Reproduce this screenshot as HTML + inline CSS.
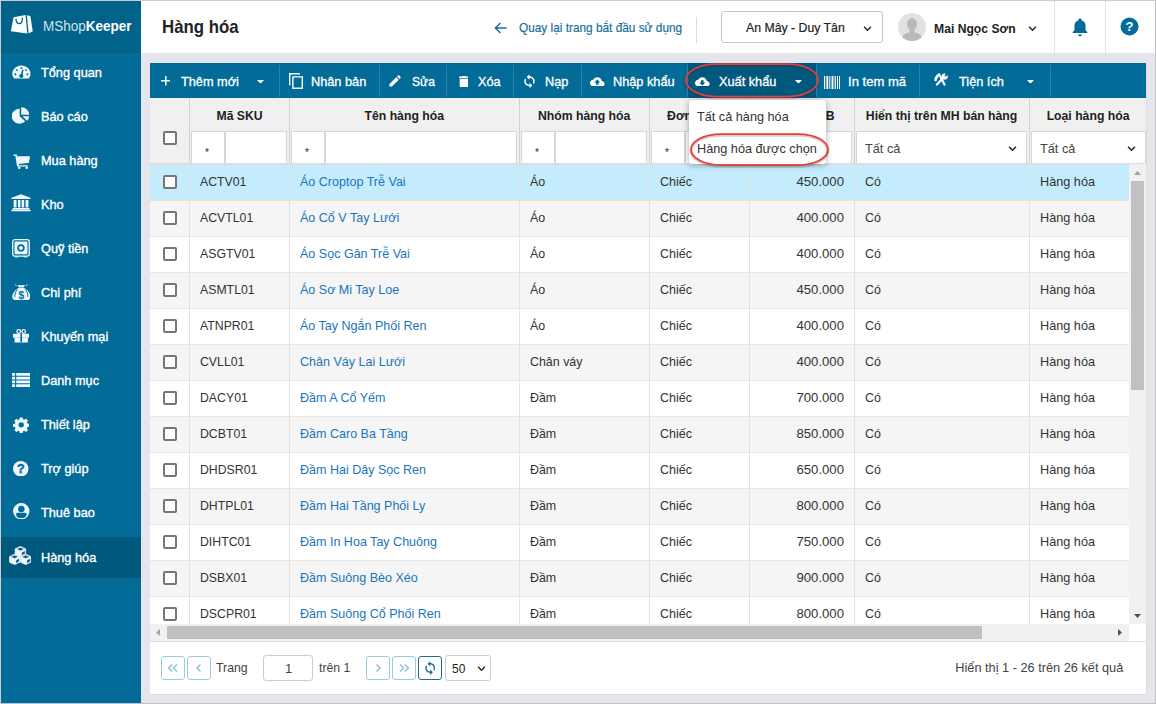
<!DOCTYPE html>
<html lang="vi">
<head>
<meta charset="utf-8">
<title>Hàng hóa - MShopKeeper</title>
<style>
*{box-sizing:border-box;margin:0;padding:0}
html,body{width:1156px;height:704px;overflow:hidden}
body{position:relative;background:#e5e6eb;font-family:"Liberation Sans",sans-serif;font-size:13px;color:#333}
.t{display:inline-block;transform:scaleX(0.91);white-space:nowrap}
#frame{position:absolute;left:0;top:0;width:1156px;height:704px;border:1px solid #bfbfbf;border-left-color:#d3ccc6;border-top-color:#d3ccc6;z-index:50;pointer-events:none}
#side{position:absolute;left:1px;top:1px;width:140px;height:702px;background:#026b97}
#logo{position:absolute;left:0;top:0;width:140px;height:52px;background:#01628a}
#logo .txt{position:absolute;left:42px;top:17px;font-size:14px;color:#fff;white-space:nowrap}
.mi{position:absolute;left:0;width:140px;height:44px;color:#fff;font-size:13px}
.mi .t{position:absolute;left:40px;top:13px;-webkit-text-stroke:0.35px #fff;transform:scaleX(.98)}
.mi svg{position:absolute}
.mi.act{background:#01587d}
#top{position:absolute;left:141px;top:1px;width:1014px;height:52px;background:#fff}
#title{position:absolute;left:21px;top:15px;font-size:19px;font-weight:bold;color:#222}
#back{position:absolute;left:378px;top:19px;font-size:13px;color:#1a6f9a;-webkit-text-stroke:0.2px #1a6f9a}
#sel{position:absolute;left:580px;top:10px;width:162px;height:32px;border:1px solid #c6c6c6;border-radius:3px;background:#fff}
#sel .t{position:absolute;left:24px;top:8px;transform:scaleX(.945);font-size:13px;color:#222;-webkit-text-stroke:0.2px #222}
#user{position:absolute;left:793px;top:20px;font-size:13px;font-weight:bold;color:#222}
.vline{position:absolute;top:0;width:1px;height:52px;background:#e2e2e2}
#panel{position:absolute;left:150px;top:63px;width:996px;height:631px;background:#fff;box-shadow:1px 1px 0 #dcdcdf}
#tb{position:absolute;left:0;top:0;width:996px;height:35px;background:#026b97;color:#fff;font-size:13px}
#tb .t{position:absolute;top:11px;-webkit-text-stroke:0.3px #fff;transform:scaleX(.98)}
#tb svg{position:absolute}
.sep{position:absolute;top:2px;width:1px;height:32px;background:#2a83ab}
#gh{position:absolute;left:0;top:35px;width:996px;height:66px;background:#f0f0f0;border-bottom:1px solid #ddd}
.hc{position:absolute;top:0;height:66px;border-left:1px solid #d2d2d2}
.hc .h{position:absolute;left:0;right:0;top:10px;text-align:center;font-weight:bold;font-size:13px;color:#222;white-space:nowrap}
.fo{position:absolute;top:33px;height:32px;width:34px;background:#fff;border:1px solid #d6d6d6;border-bottom:none}
.fo i{position:absolute;left:13px;top:15.500px;font-style:normal;font-size:10px;line-height:10px;color:#315}
.fi{position:absolute;top:33px;height:32px;background:#fff;border:1px solid #d6d6d6;border-bottom:none}
.fi .t{position:absolute;left:8px;top:9px;font-size:13px;color:#444;transform:scaleX(.978)}
#gb{position:absolute;left:0;top:101px;width:979px;height:460px;overflow:hidden;background:#fff}
.row{position:absolute;left:0;width:979px;height:36px;background:#fff;border-top:1px solid #e6e6e6}
.row.alt{background:#f5f5f5}
.row.sel{background:#c4ecfd;border-top:1px solid #ddd}
.row.r1{border-top:1px solid #f1e3b9}
.c{position:absolute;top:-1px;height:36px;border-left:1px solid #e2e2e2;font-size:13px;color:#333}
.c .t{position:absolute;top:10px}
.c.lnk{color:#1b75bb}
.cb{position:absolute;left:13px;top:11px;width:14px;height:14px;border:2px solid #757575;border-radius:2px;background:#fff}
#vs{position:absolute;left:979px;top:101px;width:17px;height:460px;background:#f1f1f1}
#hs{position:absolute;left:0;top:561px;width:979px;height:17px;background:#f1f1f1}
#ft{position:absolute;left:0;top:578px;width:996px;height:53px;background:#fff;border-top:1px solid #ddd}
.pb{position:absolute;top:14px;width:24px;height:24px;border:1px solid #9ccbe0;border-radius:3px;background:#fff}
.pb svg{position:absolute;left:0;top:0}
#ft .t{position:absolute;top:18px;font-size:13px;color:#444;transform:scaleX(.945)}
#menu{position:absolute;left:539px;top:37px;width:137px;height:64px;background:#fff;border-radius:3px;box-shadow:0 1px 6px rgba(0,0,0,.35);z-index:10}
#menu .t{position:absolute;left:8px;font-size:13px;color:#333;transform:scaleX(.976)}
.ring{position:absolute;border:1.800px solid #e2403f;box-shadow:0 1px 3px rgba(90,0,0,.4);z-index:20}
</style>
</head>
<body>
<div id="side">
<div id="logo"><svg style="position:absolute;left:9px;top:13px" width="24" height="21" viewBox="0 0 24 21"><path fill="#fff" d="M3.600 3.200L15.600 1.100 17.200 19.600 0.800 17.200z"/><path fill="#f4fafc" d="M16.900 1.200l3.500 0.900 2.400 15.200-4.200 2.300z"/><path fill="none" stroke="#01628a" stroke-width="1.300" d="M5.800 4.600c0.400 3.600 1.900 5.200 3.800 5 1.900-0.200 2.900-2.300 2.800-5.800"/></svg><div class="txt"><span class="t " style="transform-origin:0 50%;transform:scaleX(.964)"><span style="opacity:.82">MShop</span><b>Keeper</b></span></div></div>
<div class="mi" style="top:51px;height:44px"><svg style="left:11.0px;top:12.5px" width="18.8" height="14.5" preserveAspectRatio="none" viewBox="0 0 20 17"><path fill="#eef8fd" d="M10 0.5C4.5 0.5 0.3 4.8 0.3 10.2c0 1.9 0.5 3.6 1.4 5.1 0.2 0.4 0.6 0.6 1 0.6h14.6c0.4 0 0.8-0.2 1-0.6 0.9-1.5 1.4-3.2 1.4-5.1C19.7 4.8 15.5 0.5 10 0.5z"/><g fill="#026b97"><circle cx="3.6" cy="10.8" r="1.1"/><circle cx="5.2" cy="6" r="1.1"/><circle cx="10" cy="3.6" r="1.1"/><circle cx="14.8" cy="6" r="1.1"/><circle cx="16.4" cy="10.8" r="1.1"/><path d="M10.9 5.2l-1.5 5.6a2.1 2.1 0 1 0 1.9 0.5l1-5.7z"/></g></svg><span class="t " style="transform-origin:0 50%;">Tổng quan</span></div>
<div class="mi" style="top:95px;height:44px"><svg style="left:11.0px;top:11.0px" width="18.0" height="17.0" preserveAspectRatio="none" viewBox="0 0 20 20"><path fill="#eef8fd" d="M8.5 2.2v8.6l6.1 6.1A8.7 8.7 0 1 1 8.5 2.2z"/><path fill="#eef8fd" d="M10.3 0.3a8.8 8.8 0 0 1 8.8 8.8h-8.8z"/><path fill="#eef8fd" d="M11.6 10.9h7.5a8.7 8.7 0 0 1-2.3 5.3z"/></svg><span class="t " style="transform-origin:0 50%;">Báo cáo</span></div>
<div class="mi" style="top:139px;height:44px"><svg style="left:11.6px;top:13.5px" width="17.4" height="15.3" preserveAspectRatio="none" viewBox="0 0 20 18"><path fill="#eef8fd" d="M0.4 0.6h3.3c0.4 0 0.7 0.3 0.8 0.7l0.3 1.4h14c0.5 0 0.9 0.5 0.8 1l-1.4 6.2c-0.1 0.4-0.4 0.6-0.8 0.7L6.5 11.800l0.3 1.400h10.100v1.600H5.400c-0.400 0-0.700-0.300-0.800-0.700L2.700 2.200H0.400z"/><circle fill="#eef8fd" cx="7.2" cy="16.200" r="1.500"/><circle fill="#eef8fd" cx="15.800" cy="16.200" r="1.500"/></svg><span class="t " style="transform-origin:0 50%;">Mua hàng</span></div>
<div class="mi" style="top:183px;height:44px"><svg style="left:9.7px;top:10.4px" width="20.0" height="17.4" preserveAspectRatio="none" viewBox="0 0 21 20"><path fill="#eef8fd" d="M10.5 0.2l10 4v1.600H0.500V4.200z"/><path fill="#eef8fd" d="M2.800 7h3v8.500h-3zM7.300 7h2.600v8.500H7.300zM11.200 7h2.600v8.500h-2.600zM15.300 7h3v8.500h-3z"/><path fill="#eef8fd" d="M1.600 16.200h17.800v1.500H1.600zM0.500 18.200h20v1.600H0.500z"/></svg><span class="t " style="transform-origin:0 50%;">Kho</span></div>
<div class="mi" style="top:227px;height:44px"><svg style="left:10.8px;top:11.0px" width="18" height="18.800" preserveAspectRatio="none" viewBox="0 0 18 18.800"><rect fill="none" stroke="#eef8fd" stroke-width="1.300" x="0.700" y="0.700" width="16.600" height="16.400" rx="2.200"/><rect fill="#eef8fd" x="2.500" y="2.500" width="13" height="12.800" rx="1"/><circle fill="#026b97" cx="9" cy="8.900" r="3.700"/><circle fill="#eef8fd" cx="9" cy="8.900" r="2"/><rect fill="#eef8fd" x="3" y="17.400" width="3.200" height="1"/><rect fill="#eef8fd" x="11.800" y="17.400" width="3.200" height="1"/></svg><span class="t " style="transform-origin:0 50%;">Quỹ tiền</span></div>
<div class="mi" style="top:271px;height:44px"><svg style="left:10.5px;top:11.7px" width="18.7" height="16.6" preserveAspectRatio="none" viewBox="0 0 19 17"><path fill="#eef8fd" d="M5.800 1.400c1.200-0.900 2.400-0.200 3.700-0.200s2.500-0.700 3.700 0.200l-1.300 2.300H7.100z"/><path fill="none" stroke="#eef8fd" stroke-width="0.900" d="M3.200 0.600l1.600 1.200M15.800 0.600l-1.600 1.200"/><path fill="#eef8fd" d="M6.700 4.200h5.600c3.600 1.900 6.400 5.500 6.400 8.900 0 2.400-1.700 3.700-3.900 3.700H4.200c-2.200 0-3.900-1.300-3.900-3.700 0-3.400 2.800-7 6.400-8.900z"/><path fill="none" stroke="#026b97" stroke-width="1" d="M5.600 5.600C3.700 7.600 2.700 10.300 2.900 13.200M13.400 5.600c1.900 2 2.900 4.700 2.700 7.600"/><text x="9.500" y="15" font-family="Liberation Sans,sans-serif" font-size="10.500" font-weight="bold" text-anchor="middle" fill="#026b97">$</text></svg><span class="t " style="transform-origin:0 50%;">Chi phí</span></div>
<div class="mi" style="top:315px;height:44px"><svg style="left:12.0px;top:13.0px" width="16.400" height="13.600" preserveAspectRatio="none" viewBox="0 0 16.400 13.600"><circle fill="none" stroke="#eef8fd" stroke-width="1.250" cx="5.700" cy="2.500" r="1.800"/><circle fill="none" stroke="#eef8fd" stroke-width="1.250" cx="10.700" cy="2.500" r="1.800"/><rect fill="#eef8fd" x="0" y="4.800" width="16.400" height="3.800"/><rect fill="#eef8fd" x="1.500" y="8.500" width="13.400" height="5"/><rect fill="#026b97" x="7.400" y="4.800" width="1.600" height="8.200"/></svg><span class="t " style="transform-origin:0 50%;">Khuyến mại</span></div>
<div class="mi" style="top:359px;height:44px"><svg style="left:10.8px;top:13.1px" width="18.600" height="14" preserveAspectRatio="none" viewBox="0.500 0.500 19 15.300"><path fill="#eef8fd" d="M0.500 0.500h3.200v3h-3.200zM4.800 0.500h14.700v3H4.800zM0.500 4.600h3.200v3h-3.200zM4.800 4.600h14.700v3H4.800zM0.500 8.700h3.200v3h-3.200zM4.800 8.700h14.700v3H4.800zM0.500 12.800h3.200v3h-3.200zM4.800 12.800h14.700v3H4.800z"/></svg><span class="t " style="transform-origin:0 50%;">Danh mục</span></div>
<div class="mi" style="top:403px;height:44px"><svg style="left:12.0px;top:13.0px" width="16.400" height="15.700" preserveAspectRatio="none" viewBox="0.300 0.300 19.400 19.400"><path fill="#eef8fd" fill-rule="evenodd" d="M8.300 0.800h3.400l0.500 2.400 1.500 0.600 2-1.300 2.400 2.400-1.300 2 0.600 1.500 2.400 0.500v3.400l-2.400 0.500-0.600 1.500 1.300 2-2.400 2.400-2-1.300-1.500 0.600-0.500 2.400H8.300l-0.500-2.400-1.500-0.600-2 1.300-2.400-2.400 1.300-2-0.600-1.500-2.400-0.500V9l2.400-0.500 0.600-1.500-1.300-2 2.400-2.400 2 1.300 1.500-0.600zM10 6.800a3.200 3.200 0 1 0 0 6.400 3.200 3.200 0 0 0 0-6.400z"/></svg><span class="t " style="transform-origin:0 50%;">Thiết lập</span></div>
<div class="mi" style="top:447px;height:44px"><svg style="left:12.4px;top:12.6px" width="15.500" height="15.500" viewBox="0 0 18 18"><circle fill="#eef8fd" cx="9" cy="9" r="9"/><text x="9" y="14.200" font-family="Liberation Sans,sans-serif" font-size="14.500" font-weight="bold" text-anchor="middle" fill="#026b97" stroke="#026b97" stroke-width="0.500">?</text></svg><span class="t " style="transform-origin:0 50%;">Trợ giúp</span></div>
<div class="mi" style="top:491px;height:44px"><svg style="left:12.0px;top:10.8px" width="16.500" height="16.400" viewBox="0 0 16.500 16.400"><circle fill="#eef8fd" cx="8.250" cy="8.200" r="8.200"/><circle fill="#026b97" cx="8.300" cy="6.100" r="3.250"/><path fill="#026b97" d="M3.100 11.200Q3.100 9.800 4.700 9.800H11.900Q13.500 9.800 13.500 11.200Q13.300 15.100 8.300 15.100Q3.300 15.100 3.100 11.200z"/></svg><span class="t " style="transform-origin:0 50%;">Thuê bao</span></div>
<div class="mi act" style="top:536px;height:41px"><svg style="left:8.0px;top:9.0px" width="22.300" height="19" viewBox="0 0 22.300 19"><path fill="#eef8fd" fill-rule="evenodd" stroke="#eef8fd" stroke-width="0.400" stroke-linejoin="round" d="M11.40 0.30L16.80 2.85L16.80 8.45L11.40 11.00L6.00 8.45L6.00 2.85zM7.50 3.05L11.40 1.45L15.30 3.05L11.40 4.65zM12.70 6.49L16.00 4.73L16.00 7.63L12.70 9.59zM5.60 8.10L11.00 10.65L11.00 16.25L5.60 18.80L0.20 16.25L0.20 10.65zM1.70 10.85L5.60 9.25L9.50 10.85L5.60 12.45zM6.90 14.29L10.20 12.53L10.20 15.43L6.90 17.39zM16.70 8.10L22.10 10.65L22.10 16.25L16.70 18.80L11.30 16.25L11.30 10.65zM12.80 10.85L16.70 9.25L20.60 10.85L16.70 12.45zM18.00 14.29L21.30 12.53L21.30 15.43L18.00 17.39z"/></svg><span class="t " style="transform-origin:0 50%;">Hàng hóa</span></div>
</div>
<div id="top">
<div id="title"><span class="t " style="transform-origin:0 50%;;transform:scaleX(0.885)">Hàng hóa</span></div>
<svg style="position:absolute;left:353px;top:21px" width="13" height="12" viewBox="0 0 13 12"><path fill="none" stroke="#1a6f9a" stroke-width="1.500" d="M12.500 6H1.800M6.400 1L1.400 6l5 5"/></svg>
<div id="back"><span class="t " style="transform-origin:0 50%;">Quay lại trang bắt đầu sử dụng</span></div>
<div style="position:absolute;left:555px;top:16px;width:1px;height:26px;background:#dcdcdc"></div>
<div id="sel"><span class="t " style="transform-origin:0 50%;">An Mây - Duy Tân</span><svg style="position:absolute;left:141px;top:13.500px" width="9" height="6" viewBox="0 0 10 7"><path fill="none" stroke="#222" stroke-width="1.600" d="M1 1l4 4 4-4"/></svg></div>
<svg style="position:absolute;left:757px;top:12px" width="28" height="28" viewBox="0 0 28 28"><defs><clipPath id="av"><circle cx="14" cy="14" r="14"/></clipPath></defs><circle cx="14" cy="14" r="14" fill="#e2e2e2"/><g clip-path="url(#av)" fill="#b9b9b9"><ellipse cx="14" cy="11" rx="5" ry="6"/><path d="M3.500 28c0-6 4-8.500 10.500-8.500S24.500 22 24.500 28z"/><rect x="11.500" y="15" width="5" height="6"/></g></svg>
<div id="user"><span class="t " style="transform-origin:0 50%;transform:scaleX(.935)">Mai Ngọc Sơn</span></div>
<svg style="position:absolute;left:886.500px;top:24.500px" width="9" height="6" viewBox="0 0 10 7"><path fill="none" stroke="#222" stroke-width="1.600" d="M1 1l4 4 4-4"/></svg>
<div class="vline" style="left:913px"></div><div class="vline" style="left:964px"></div>
<svg style="position:absolute;left:931px;top:17px" width="16" height="19.500" viewBox="0 0 16 20"><path fill="#026b97" d="M8 0.300c0.800 0 1.400 0.600 1.400 1.400v0.500c2.600 0.600 4.300 2.800 4.300 5.700v4.700l1.900 2v0.900H0.400v-0.900l1.900-2V7.900c0-2.900 1.700-5.100 4.300-5.700V1.700C6.600 0.900 7.200 0.300 8 0.300zM6 16.800h4a2 2 0 0 1-4 0z"/></svg>
<svg style="position:absolute;left:979px;top:15.500px" width="19" height="19" viewBox="0 0 19 19"><circle fill="#026b97" cx="9.500" cy="9.500" r="9"/><text x="9.500" y="14.200" font-family="Liberation Sans,sans-serif" font-size="13" font-weight="bold" text-anchor="middle" fill="#fff">?</text></svg>
</div>
<div id="panel">
<div id="tb">
<div style="position:absolute;left:538px;top:0;width:128px;height:35px;background:#01587d"></div><div class="sep" style="left:537px"></div><div class="sep" style="left:666px"></div>
<svg style="left:10.800px;top:13.300px" width="9.600" height="9.600" viewBox="0 0 10 10"><path fill="#fff" d="M4.200 0h1.600v4.200H10v1.600H5.800V10H4.200V5.800H0V4.200h4.200z"/></svg><span class="t " style="transform-origin:0 50%;left:31px">Thêm mới</span><svg style="left:107.0px;top:16.6px" width="7" height="3.800" viewBox="0 0 8 4.500" preserveAspectRatio="none"><path fill="#fff" d="M0 0h8L4 4.500z"/></svg><div class="sep" style="left:129px"></div>
<svg style="left:139px;top:10px" width="14" height="16" viewBox="0 0 14 16"><path fill="none" stroke="#fff" stroke-width="1.400" d="M10.800 0.700H0.700v11.500M3.900 3.900h9.400v11.400H3.900z"/></svg><span class="t " style="transform-origin:0 50%;left:161px">Nhân bản</span><div class="sep" style="left:229px"></div>
<svg style="left:239.400px;top:11.800px" width="12" height="12" viewBox="0 0 13 13"><path fill="#fff" d="M0.500 12.500v-2.700l7.400-7.400 2.700 2.700-7.400 7.400zM8.700 1.600l1.200-1.200c0.300-0.300 0.700-0.300 1 0l1.700 1.700c0.300 0.300 0.300 0.700 0 1l-1.200 1.200z"/></svg><span class="t " style="transform-origin:0 50%;left:261.500px;transform:scaleX(.93)">Sửa</span><div class="sep" style="left:296px"></div>
<svg style="left:308.500px;top:12.800px" width="9.800" height="11.200" viewBox="0 0 10 13" preserveAspectRatio="none"><path fill="#fff" d="M0.700 3.300h8.600v8.300c0 0.800-0.600 1.400-1.400 1.400H2.100c-0.800 0-1.400-0.600-1.400-1.400zM3 0.700l0.700-0.700h2.600l0.700 0.700H10v1.600H0V0.700z"/></svg><span class="t " style="transform-origin:0 50%;left:328px">Xóa</span><div class="sep" style="left:363px"></div>
<svg style="left:374.400px;top:11px" width="11" height="14.400" viewBox="0 0 12 16.600" preserveAspectRatio="none"><path fill="#fff" d="M6 2.700V0.400L2.900 3.500 6 6.600V4.300c2.300 0 4.100 1.800 4.100 4.100 0 0.700-0.200 1.400-0.500 1.900l1.200 1.200c0.600-0.900 0.900-2 0.900-3.100C11.700 5.200 9.200 2.700 6 2.700zM6 12.500c-2.300 0-4.100-1.800-4.100-4.100 0-0.700 0.200-1.400 0.500-1.900L1.200 5.300C0.600 6.200 0.300 7.300 0.300 8.400c0 3.200 2.500 5.700 5.700 5.700v2.300l3.100-3.100L6 10.200z"/></svg><span class="t " style="transform-origin:0 50%;left:395px">Nạp</span><div class="sep" style="left:431px"></div>
<svg style="left:440px;top:13.500px" width="14.600" height="9.800" viewBox="0 0 15 10.600" preserveAspectRatio="none"><path fill="#fff" d="M12.100 4.200C11.700 2 9.800 0.300 7.500 0.300 5.700 0.300 4.100 1.300 3.300 2.900 1.400 3.100 0 4.700 0 6.600c0 2.100 1.700 3.800 3.800 3.800h8.100c1.700 0 3.100-1.400 3.100-3.100 0-1.700-1.300-3-2.900-3.100zM8.800 6v2.500H6.200V6H4.300l3.200-3.200L10.700 6z"/></svg><span class="t " style="transform-origin:0 50%;left:463px">Nhập khẩu</span><svg style="left:545.400px;top:13.500px" width="14.600" height="9.800" viewBox="0 0 15 10.600" preserveAspectRatio="none"><path fill="#fff" d="M12.100 4.200C11.700 2 9.800 0.300 7.500 0.300 5.700 0.300 4.100 1.300 3.300 2.900 1.400 3.100 0 4.700 0 6.600c0 2.100 1.700 3.800 3.800 3.800h8.100c1.700 0 3.100-1.400 3.100-3.100 0-1.700-1.300-3-2.900-3.100zM6.200 3.500h2.600V6h1.900L7.500 9.200 4.300 6h1.900z"/></svg><span class="t " style="transform-origin:0 50%;left:569px">Xuất khẩu</span><svg style="left:644.7px;top:16.6px" width="7" height="3.800" viewBox="0 0 8 4.500" preserveAspectRatio="none"><path fill="#fff" d="M0 0h8L4 4.500z"/></svg><svg style="left:674px;top:13px" width="16" height="13" viewBox="0 0 16 13"><path fill="#fff" d="M0 0h1.200v13H0zM2.400 0h1.800v13H2.400zM5.300 0h1v13h-1zM7.600 0h1.800v13H7.600zM10.600 0h1.200v13h-1.200zM13 0h1v13h-1zM15 0h1v13h-1z"/></svg><span class="t " style="transform-origin:0 50%;left:698px;transform:scaleX(1.005)">In tem mã</span><div class="sep" style="left:769px"></div>
<svg style="left:784px;top:10px" width="14.800" height="13" viewBox="0 0 14.800 13"><path fill="none" stroke="#fff" stroke-width="2.200" stroke-linecap="round" d="M2.900 11.500L9.800 4.300M10.500 11.600L6.300 3.400"/><path fill="#fff" d="M0.300 8C0.200 4.500 2.200 1.400 5.600 0.100L7 2.300C4.700 3.100 3 5 2.500 8.300z"/><circle fill="#fff" cx="10.700" cy="3.500" r="3.100"/><path fill="#026b97" d="M10.400 2.200L13.700-1.300 15.300 0.300 11.900 3.700z"/></svg><span class="t " style="transform-origin:0 50%;left:809px">Tiện ích</span><svg style="left:877.0999999999999px;top:16.6px" width="7" height="3.800" viewBox="0 0 8 4.500" preserveAspectRatio="none"><path fill="#fff" d="M0 0h8L4 4.500z"/></svg><div class="sep" style="left:900px"></div>
</div>
<div id="gh">
<div class="hc" style="left:0;width:39px;border-left:none"><div class="cb" style="top:33px"></div></div>
<div class="hc" style="left:39px;width:100px"><div class="h"><span class="t " style="transform-origin:50% 50%;transform:scaleX(.94)">Mã SKU</span></div><div class="fo" style="left:1px"><i>*</i></div><div class="fi" style="left:35px;width:62px"></div></div>
<div class="hc" style="left:139px;width:230px"><div class="h"><span class="t " style="transform-origin:50% 50%;transform:scaleX(.94)">Tên hàng hóa</span></div><div class="fo" style="left:1px"><i>*</i></div><div class="fi" style="left:35px;width:192px"></div></div>
<div class="hc" style="left:369px;width:130px"><div class="h"><span class="t " style="transform-origin:50% 50%;transform:scaleX(.94)">Nhóm hàng hóa</span></div><div class="fo" style="left:1px"><i>*</i></div><div class="fi" style="left:35px;width:92px"></div></div>
<div class="hc" style="left:499px;width:100px"><div class="h"><span class="t " style="transform-origin:50% 50%;transform:scaleX(.94)">Đơn vị tính</span></div><div class="fo" style="left:1px"><i>*</i></div><div class="fi" style="left:35px;width:62px"></div></div>
<div class="hc" style="left:599px;width:105px"><div class="h"><span class="t " style="transform-origin:50% 50%;transform:scaleX(.94)">Giá bán TB</span></div><div class="fo" style="left:1px"><i>*</i></div><div class="fi" style="left:35px;width:67px"></div></div>
<div class="hc" style="left:704px;width:175px"><div class="h"><span class="t " style="transform-origin:50% 50%;transform:scaleX(.94)">Hiển thị trên MH bán hàng</span></div><div class="fi" style="left:1px;width:171px"><span class="t " style="transform-origin:0 50%;">Tất cả</span><svg style="position:absolute;right:9px;top:14px" width="9" height="6" viewBox="0 0 10 7"><path fill="none" stroke="#222" stroke-width="1.700" d="M1 1l4 4 4-4"/></svg></div></div>
<div class="hc" style="left:879px;width:117px"><div class="h"><span class="t " style="transform-origin:50% 50%;transform:scaleX(.94)">Loại hàng hóa</span></div><div class="fi" style="left:1px;width:115px"><span class="t " style="transform-origin:0 50%;">Tất cả</span><svg style="position:absolute;right:9px;top:14px" width="9" height="6" viewBox="0 0 10 7"><path fill="none" stroke="#222" stroke-width="1.700" d="M1 1l4 4 4-4"/></svg></div></div>
</div>
<div id="gb">
<div class="row sel" style="top:0px"><div class="c" style="left:0;width:39px;border-left:none"><div class="cb"></div></div><div class="c" style="left:39px;width:100px"><span class="t " style="transform-origin:0 50%;left:10px;transform:scaleX(0.945)">ACTV01</span></div><div class="c lnk" style="left:139px;width:230px"><span class="t " style="transform-origin:0 50%;left:10px;transform:scaleX(0.964)">Áo Croptop Trễ Vai</span></div><div class="c" style="left:369px;width:130px"><span class="t " style="transform-origin:0 50%;left:10px;transform:scaleX(0.955)">Áo</span></div><div class="c" style="left:499px;width:100px"><span class="t " style="transform-origin:0 50%;left:10px;transform:scaleX(0.961)">Chiếc</span></div><div class="c" style="left:599px;width:105px"><span class="t " style="transform-origin:100% 50%;right:10px;transform:scaleX(1.012)">450.000</span></div><div class="c" style="left:704px;width:175px"><span class="t " style="transform-origin:0 50%;left:10px;transform:scaleX(0.955)">Có</span></div><div class="c" style="left:879px;width:117px"><span class="t " style="transform-origin:0 50%;left:10px;transform:scaleX(0.976)">Hàng hóa</span></div></div>
<div class="row alt r1" style="top:36px"><div class="c" style="left:0;width:39px;border-left:none"><div class="cb"></div></div><div class="c" style="left:39px;width:100px"><span class="t " style="transform-origin:0 50%;left:10px;transform:scaleX(0.945)">ACVTL01</span></div><div class="c lnk" style="left:139px;width:230px"><span class="t " style="transform-origin:0 50%;left:10px;transform:scaleX(0.964)">Áo Cổ V Tay Lưới</span></div><div class="c" style="left:369px;width:130px"><span class="t " style="transform-origin:0 50%;left:10px;transform:scaleX(0.955)">Áo</span></div><div class="c" style="left:499px;width:100px"><span class="t " style="transform-origin:0 50%;left:10px;transform:scaleX(0.961)">Chiếc</span></div><div class="c" style="left:599px;width:105px"><span class="t " style="transform-origin:100% 50%;right:10px;transform:scaleX(1.012)">400.000</span></div><div class="c" style="left:704px;width:175px"><span class="t " style="transform-origin:0 50%;left:10px;transform:scaleX(0.955)">Có</span></div><div class="c" style="left:879px;width:117px"><span class="t " style="transform-origin:0 50%;left:10px;transform:scaleX(0.976)">Hàng hóa</span></div></div>
<div class="row" style="top:72px"><div class="c" style="left:0;width:39px;border-left:none"><div class="cb"></div></div><div class="c" style="left:39px;width:100px"><span class="t " style="transform-origin:0 50%;left:10px;transform:scaleX(0.945)">ASGTV01</span></div><div class="c lnk" style="left:139px;width:230px"><span class="t " style="transform-origin:0 50%;left:10px;transform:scaleX(0.964)">Áo Sọc Gân Trễ Vai</span></div><div class="c" style="left:369px;width:130px"><span class="t " style="transform-origin:0 50%;left:10px;transform:scaleX(0.955)">Áo</span></div><div class="c" style="left:499px;width:100px"><span class="t " style="transform-origin:0 50%;left:10px;transform:scaleX(0.961)">Chiếc</span></div><div class="c" style="left:599px;width:105px"><span class="t " style="transform-origin:100% 50%;right:10px;transform:scaleX(1.012)">400.000</span></div><div class="c" style="left:704px;width:175px"><span class="t " style="transform-origin:0 50%;left:10px;transform:scaleX(0.955)">Có</span></div><div class="c" style="left:879px;width:117px"><span class="t " style="transform-origin:0 50%;left:10px;transform:scaleX(0.976)">Hàng hóa</span></div></div>
<div class="row alt" style="top:108px"><div class="c" style="left:0;width:39px;border-left:none"><div class="cb"></div></div><div class="c" style="left:39px;width:100px"><span class="t " style="transform-origin:0 50%;left:10px;transform:scaleX(0.945)">ASMTL01</span></div><div class="c lnk" style="left:139px;width:230px"><span class="t " style="transform-origin:0 50%;left:10px;transform:scaleX(0.964)">Áo Sơ Mi Tay Loe</span></div><div class="c" style="left:369px;width:130px"><span class="t " style="transform-origin:0 50%;left:10px;transform:scaleX(0.955)">Áo</span></div><div class="c" style="left:499px;width:100px"><span class="t " style="transform-origin:0 50%;left:10px;transform:scaleX(0.961)">Chiếc</span></div><div class="c" style="left:599px;width:105px"><span class="t " style="transform-origin:100% 50%;right:10px;transform:scaleX(1.012)">450.000</span></div><div class="c" style="left:704px;width:175px"><span class="t " style="transform-origin:0 50%;left:10px;transform:scaleX(0.955)">Có</span></div><div class="c" style="left:879px;width:117px"><span class="t " style="transform-origin:0 50%;left:10px;transform:scaleX(0.976)">Hàng hóa</span></div></div>
<div class="row" style="top:144px"><div class="c" style="left:0;width:39px;border-left:none"><div class="cb"></div></div><div class="c" style="left:39px;width:100px"><span class="t " style="transform-origin:0 50%;left:10px;transform:scaleX(0.945)">ATNPR01</span></div><div class="c lnk" style="left:139px;width:230px"><span class="t " style="transform-origin:0 50%;left:10px;transform:scaleX(0.964)">Áo Tay Ngắn Phối Ren</span></div><div class="c" style="left:369px;width:130px"><span class="t " style="transform-origin:0 50%;left:10px;transform:scaleX(0.955)">Áo</span></div><div class="c" style="left:499px;width:100px"><span class="t " style="transform-origin:0 50%;left:10px;transform:scaleX(0.961)">Chiếc</span></div><div class="c" style="left:599px;width:105px"><span class="t " style="transform-origin:100% 50%;right:10px;transform:scaleX(1.012)">400.000</span></div><div class="c" style="left:704px;width:175px"><span class="t " style="transform-origin:0 50%;left:10px;transform:scaleX(0.955)">Có</span></div><div class="c" style="left:879px;width:117px"><span class="t " style="transform-origin:0 50%;left:10px;transform:scaleX(0.976)">Hàng hóa</span></div></div>
<div class="row alt" style="top:180px"><div class="c" style="left:0;width:39px;border-left:none"><div class="cb"></div></div><div class="c" style="left:39px;width:100px"><span class="t " style="transform-origin:0 50%;left:10px;transform:scaleX(0.945)">CVLL01</span></div><div class="c lnk" style="left:139px;width:230px"><span class="t " style="transform-origin:0 50%;left:10px;transform:scaleX(0.964)">Chân Váy Lai Lưới</span></div><div class="c" style="left:369px;width:130px"><span class="t " style="transform-origin:0 50%;left:10px;transform:scaleX(0.955)">Chân váy</span></div><div class="c" style="left:499px;width:100px"><span class="t " style="transform-origin:0 50%;left:10px;transform:scaleX(0.961)">Chiếc</span></div><div class="c" style="left:599px;width:105px"><span class="t " style="transform-origin:100% 50%;right:10px;transform:scaleX(1.012)">400.000</span></div><div class="c" style="left:704px;width:175px"><span class="t " style="transform-origin:0 50%;left:10px;transform:scaleX(0.955)">Có</span></div><div class="c" style="left:879px;width:117px"><span class="t " style="transform-origin:0 50%;left:10px;transform:scaleX(0.976)">Hàng hóa</span></div></div>
<div class="row" style="top:216px"><div class="c" style="left:0;width:39px;border-left:none"><div class="cb"></div></div><div class="c" style="left:39px;width:100px"><span class="t " style="transform-origin:0 50%;left:10px;transform:scaleX(0.945)">DACY01</span></div><div class="c lnk" style="left:139px;width:230px"><span class="t " style="transform-origin:0 50%;left:10px;transform:scaleX(0.964)">Đầm A Cổ Yếm</span></div><div class="c" style="left:369px;width:130px"><span class="t " style="transform-origin:0 50%;left:10px;transform:scaleX(0.955)">Đầm</span></div><div class="c" style="left:499px;width:100px"><span class="t " style="transform-origin:0 50%;left:10px;transform:scaleX(0.961)">Chiếc</span></div><div class="c" style="left:599px;width:105px"><span class="t " style="transform-origin:100% 50%;right:10px;transform:scaleX(1.012)">700.000</span></div><div class="c" style="left:704px;width:175px"><span class="t " style="transform-origin:0 50%;left:10px;transform:scaleX(0.955)">Có</span></div><div class="c" style="left:879px;width:117px"><span class="t " style="transform-origin:0 50%;left:10px;transform:scaleX(0.976)">Hàng hóa</span></div></div>
<div class="row alt" style="top:252px"><div class="c" style="left:0;width:39px;border-left:none"><div class="cb"></div></div><div class="c" style="left:39px;width:100px"><span class="t " style="transform-origin:0 50%;left:10px;transform:scaleX(0.945)">DCBT01</span></div><div class="c lnk" style="left:139px;width:230px"><span class="t " style="transform-origin:0 50%;left:10px;transform:scaleX(0.964)">Đầm Caro Ba Tầng</span></div><div class="c" style="left:369px;width:130px"><span class="t " style="transform-origin:0 50%;left:10px;transform:scaleX(0.955)">Đầm</span></div><div class="c" style="left:499px;width:100px"><span class="t " style="transform-origin:0 50%;left:10px;transform:scaleX(0.961)">Chiếc</span></div><div class="c" style="left:599px;width:105px"><span class="t " style="transform-origin:100% 50%;right:10px;transform:scaleX(1.012)">850.000</span></div><div class="c" style="left:704px;width:175px"><span class="t " style="transform-origin:0 50%;left:10px;transform:scaleX(0.955)">Có</span></div><div class="c" style="left:879px;width:117px"><span class="t " style="transform-origin:0 50%;left:10px;transform:scaleX(0.976)">Hàng hóa</span></div></div>
<div class="row" style="top:288px"><div class="c" style="left:0;width:39px;border-left:none"><div class="cb"></div></div><div class="c" style="left:39px;width:100px"><span class="t " style="transform-origin:0 50%;left:10px;transform:scaleX(0.945)">DHDSR01</span></div><div class="c lnk" style="left:139px;width:230px"><span class="t " style="transform-origin:0 50%;left:10px;transform:scaleX(0.964)">Đầm Hai Dây Sọc Ren</span></div><div class="c" style="left:369px;width:130px"><span class="t " style="transform-origin:0 50%;left:10px;transform:scaleX(0.955)">Đầm</span></div><div class="c" style="left:499px;width:100px"><span class="t " style="transform-origin:0 50%;left:10px;transform:scaleX(0.961)">Chiếc</span></div><div class="c" style="left:599px;width:105px"><span class="t " style="transform-origin:100% 50%;right:10px;transform:scaleX(1.012)">650.000</span></div><div class="c" style="left:704px;width:175px"><span class="t " style="transform-origin:0 50%;left:10px;transform:scaleX(0.955)">Có</span></div><div class="c" style="left:879px;width:117px"><span class="t " style="transform-origin:0 50%;left:10px;transform:scaleX(0.976)">Hàng hóa</span></div></div>
<div class="row alt" style="top:324px"><div class="c" style="left:0;width:39px;border-left:none"><div class="cb"></div></div><div class="c" style="left:39px;width:100px"><span class="t " style="transform-origin:0 50%;left:10px;transform:scaleX(0.945)">DHTPL01</span></div><div class="c lnk" style="left:139px;width:230px"><span class="t " style="transform-origin:0 50%;left:10px;transform:scaleX(0.964)">Đầm Hai Tầng Phối Ly</span></div><div class="c" style="left:369px;width:130px"><span class="t " style="transform-origin:0 50%;left:10px;transform:scaleX(0.955)">Đầm</span></div><div class="c" style="left:499px;width:100px"><span class="t " style="transform-origin:0 50%;left:10px;transform:scaleX(0.961)">Chiếc</span></div><div class="c" style="left:599px;width:105px"><span class="t " style="transform-origin:100% 50%;right:10px;transform:scaleX(1.012)">800.000</span></div><div class="c" style="left:704px;width:175px"><span class="t " style="transform-origin:0 50%;left:10px;transform:scaleX(0.955)">Có</span></div><div class="c" style="left:879px;width:117px"><span class="t " style="transform-origin:0 50%;left:10px;transform:scaleX(0.976)">Hàng hóa</span></div></div>
<div class="row" style="top:360px"><div class="c" style="left:0;width:39px;border-left:none"><div class="cb"></div></div><div class="c" style="left:39px;width:100px"><span class="t " style="transform-origin:0 50%;left:10px;transform:scaleX(0.945)">DIHTC01</span></div><div class="c lnk" style="left:139px;width:230px"><span class="t " style="transform-origin:0 50%;left:10px;transform:scaleX(0.964)">Đầm In Hoa Tay Chuông</span></div><div class="c" style="left:369px;width:130px"><span class="t " style="transform-origin:0 50%;left:10px;transform:scaleX(0.955)">Đầm</span></div><div class="c" style="left:499px;width:100px"><span class="t " style="transform-origin:0 50%;left:10px;transform:scaleX(0.961)">Chiếc</span></div><div class="c" style="left:599px;width:105px"><span class="t " style="transform-origin:100% 50%;right:10px;transform:scaleX(1.012)">750.000</span></div><div class="c" style="left:704px;width:175px"><span class="t " style="transform-origin:0 50%;left:10px;transform:scaleX(0.955)">Có</span></div><div class="c" style="left:879px;width:117px"><span class="t " style="transform-origin:0 50%;left:10px;transform:scaleX(0.976)">Hàng hóa</span></div></div>
<div class="row alt" style="top:396px"><div class="c" style="left:0;width:39px;border-left:none"><div class="cb"></div></div><div class="c" style="left:39px;width:100px"><span class="t " style="transform-origin:0 50%;left:10px;transform:scaleX(0.945)">DSBX01</span></div><div class="c lnk" style="left:139px;width:230px"><span class="t " style="transform-origin:0 50%;left:10px;transform:scaleX(0.964)">Đầm Suông Bèo Xéo</span></div><div class="c" style="left:369px;width:130px"><span class="t " style="transform-origin:0 50%;left:10px;transform:scaleX(0.955)">Đầm</span></div><div class="c" style="left:499px;width:100px"><span class="t " style="transform-origin:0 50%;left:10px;transform:scaleX(0.961)">Chiếc</span></div><div class="c" style="left:599px;width:105px"><span class="t " style="transform-origin:100% 50%;right:10px;transform:scaleX(1.012)">900.000</span></div><div class="c" style="left:704px;width:175px"><span class="t " style="transform-origin:0 50%;left:10px;transform:scaleX(0.955)">Có</span></div><div class="c" style="left:879px;width:117px"><span class="t " style="transform-origin:0 50%;left:10px;transform:scaleX(0.976)">Hàng hóa</span></div></div>
<div class="row" style="top:432px"><div class="c" style="left:0;width:39px;border-left:none"><div class="cb"></div></div><div class="c" style="left:39px;width:100px"><span class="t " style="transform-origin:0 50%;left:10px;transform:scaleX(0.945)">DSCPR01</span></div><div class="c lnk" style="left:139px;width:230px"><span class="t " style="transform-origin:0 50%;left:10px;transform:scaleX(0.964)">Đầm Suông Cổ Phối Ren</span></div><div class="c" style="left:369px;width:130px"><span class="t " style="transform-origin:0 50%;left:10px;transform:scaleX(0.955)">Đầm</span></div><div class="c" style="left:499px;width:100px"><span class="t " style="transform-origin:0 50%;left:10px;transform:scaleX(0.961)">Chiếc</span></div><div class="c" style="left:599px;width:105px"><span class="t " style="transform-origin:100% 50%;right:10px;transform:scaleX(1.012)">800.000</span></div><div class="c" style="left:704px;width:175px"><span class="t " style="transform-origin:0 50%;left:10px;transform:scaleX(0.955)">Có</span></div><div class="c" style="left:879px;width:117px"><span class="t " style="transform-origin:0 50%;left:10px;transform:scaleX(0.976)">Hàng hóa</span></div></div>
</div>
<div id="vs"><svg style="position:absolute;left:5px;top:7px" width="7" height="4" viewBox="0 0 9 5"><path fill="#a3a3a3" d="M0 5h9L4.500 0z"/></svg><div style="position:absolute;left:2px;top:17px;width:13px;height:209px;background:#c1c1c1"></div><svg style="position:absolute;left:5px;top:450px" width="7" height="4" viewBox="0 0 9 5"><path fill="#505050" d="M0 0h9L4.500 5z"/></svg></div>
<div id="hs"><svg style="position:absolute;left:6px;top:5px" width="4" height="7" viewBox="0 0 5 9"><path fill="#a3a3a3" d="M5 0v9L0 4.500z"/></svg><div style="position:absolute;left:17px;top:2px;width:815px;height:13px;background:#c1c1c1"></div><svg style="position:absolute;left:968px;top:5px" width="4" height="7" viewBox="0 0 5 9"><path fill="#505050" d="M0 0v9l5-4.500z"/></svg></div>
<div id="ft">
<div class="pb" style="left:11px;width:24px;border-color:#9ccbe0"><svg width="22" height="22" viewBox="0 0 22 22"><path fill="none" stroke="#8fc3da" stroke-width="1.600" d="M10.200 7.500l-3.500 3.500 3.500 3.500M15 7.500l-3.500 3.500 3.500 3.500"/></svg></div><div class="pb" style="left:37px;width:24px;border-color:#9ccbe0"><svg width="22" height="22" viewBox="0 0 22 22"><path fill="none" stroke="#8fc3da" stroke-width="1.600" d="M12.500 7.500l-3.500 3.500 3.500 3.500"/></svg></div><span class="t " style="transform-origin:0 50%;left:66px">Trang</span><div style="position:absolute;left:113px;top:13px;width:50px;height:26px;border:1px solid #ccc;border-radius:3px"><span style="position:absolute;left:21px;top:5px;font-size:13px;color:#444">1</span></div><span class="t " style="transform-origin:0 50%;left:169px">trên 1</span><div class="pb" style="left:216px;width:24px;border-color:#9ccbe0"><svg width="22" height="22" viewBox="0 0 22 22"><path fill="none" stroke="#8fc3da" stroke-width="1.600" d="M9.500 7.500l3.500 3.500-3.500 3.500"/></svg></div><div class="pb" style="left:242px;width:24px;border-color:#9ccbe0"><svg width="22" height="22" viewBox="0 0 22 22"><path fill="none" stroke="#8fc3da" stroke-width="1.600" d="M7 7.500l3.500 3.500-3.500 3.500M11.800 7.500l3.500 3.500-3.500 3.500"/></svg></div><div class="pb" style="left:268px;width:24px;border-color:#1a6f9a"><svg width="22" height="22" viewBox="0 0 22 22"><path fill="#1a6f9a" transform="translate(6 3.800) scale(0.860)" d="M6 2.700V0.400L2.900 3.500 6 6.600V4.300c2.300 0 4.100 1.800 4.100 4.100 0 0.700-0.200 1.400-0.500 1.900l1.200 1.200c0.600-0.900 0.900-2 0.900-3.100C11.700 5.200 9.200 2.700 6 2.700zM6 12.500c-2.300 0-4.100-1.800-4.100-4.100 0-0.700 0.200-1.400 0.500-1.900L1.200 5.300C0.600 6.200 0.300 7.300 0.300 8.400c0 3.200 2.500 5.700 5.700 5.700v2.300l3.100-3.100L6 10.200z"/></svg></div><div style="position:absolute;left:295px;top:13px;width:46px;height:26px;border:1px solid #ccc;border-radius:3px"><span style="position:absolute;left:6px;top:5px;font-size:13px;color:#222;display:inline-block;transform:scaleX(.92);transform-origin:0 50%">50</span><svg style="position:absolute;left:31px;top:10px" width="9" height="6" viewBox="0 0 10 7"><path fill="none" stroke="#222" stroke-width="1.600" d="M1 1l4 4 4-4"/></svg></div><span class="t " style="transform-origin:100% 50%;right:23px;transform:scaleX(.981)">Hiển thị 1 - 26 trên 26 kết quả</span></div>
<div id="menu"><span class="t " style="transform-origin:0 50%;top:9px">Tất cả hàng hóa</span><span class="t " style="transform-origin:0 50%;top:41px">Hàng hóa được chọn</span></div>
<svg style="position:absolute;left:532px;top:-3px;z-index:20;overflow:visible" width="140" height="42.5" viewBox="-3 -3 140 42.5"><rect x="1" y="2.200" width="132" height="32.5" rx="30" ry="16.25" fill="none" stroke="#5a0000" stroke-opacity="0.200" stroke-width="3"/><rect x="1" y="1" width="132" height="32.5" rx="30" ry="16.25" fill="none" stroke="#e2403f" stroke-width="1.750"/></svg>
<svg style="position:absolute;left:537px;top:67px;z-index:20;overflow:visible" width="145" height="41" viewBox="-3 -3 145 41"><rect x="1" y="2.200" width="137" height="31" rx="30" ry="15.5" fill="none" stroke="#5a0000" stroke-opacity="0.200" stroke-width="3"/><rect x="1" y="1" width="137" height="31" rx="30" ry="15.5" fill="none" stroke="#e2403f" stroke-width="1.750"/></svg>
</div>
<div id="frame"></div>
</body>
</html>
